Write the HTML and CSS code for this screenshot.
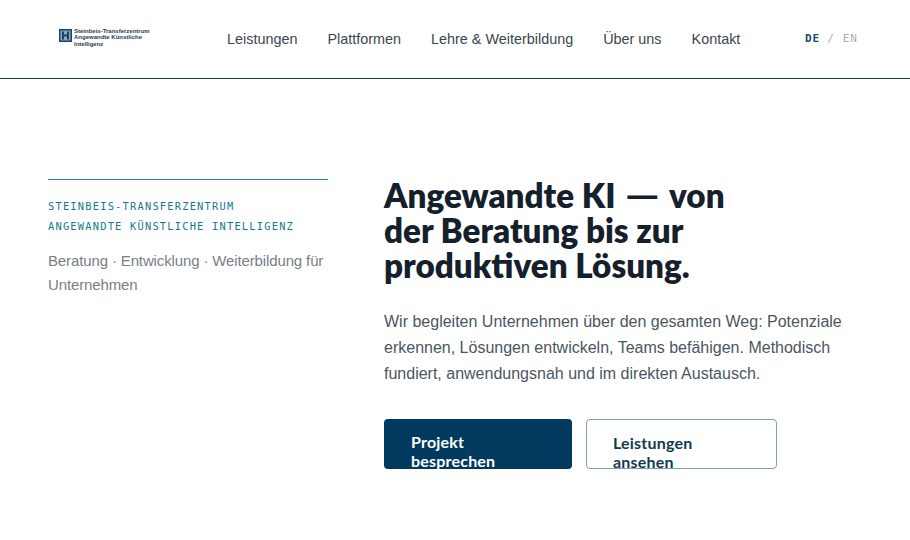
FILE: index.html
```html
<!DOCTYPE html>
<html lang="de">
<head>
  <meta charset="UTF-8">
  <title>Angewandte KI</title>
  <link rel="stylesheet" href="styles.css">
</head>
<body>
  <header class="site-header">
    <a class="logo" href="#">
      <svg class="logo-mark" viewBox="0 0 13 13" width="13" height="13">
        <rect x="0" y="0" width="13" height="13" fill="#1d4468"/>
        <rect x="1.500" y="1.500" width="10" height="10" fill="#8fa6bb"/>
        <path d="M3 2.500h2v3h3v-3h2v8H8v-3H5v3H3z" fill="#1d4468"/>
      </svg>
      <span class="logo-text">
        <span>Steinbeis-Transferzentrum</span>
        <span>Angewandte Künstliche</span>
        <span>Intelligenz</span>
      </span>
    </a>
    <nav class="main-nav">
      <a href="#">Leistungen</a>
      <a href="#">Plattformen</a>
      <a href="#">Lehre &amp; Weiterbildung</a>
      <a href="#">Über uns</a>
      <a href="#">Kontakt</a>
    </nav>
    <div class="lang-switch">
      <span class="lang-active">DE</span>
      <span class="lang-sep">/</span>
      <span class="lang-other">EN</span>
    </div>
  </header>

  <main class="hero">
    <aside class="hero-side">
      <p class="eyebrow">STEINBEIS-TRANSFERZENTRUM<br>ANGEWANDTE KÜNSTLICHE INTELLIGENZ</p>
      <p class="side-note">Beratung · Entwicklung · Weiterbildung für Unternehmen</p>
    </aside>
    <section class="hero-main">
      <h1>Angewandte KI <span class="dash">—</span> von der Beratung bis zur produktiven Lösung.</h1>
      <p class="lead">Wir begleiten Unternehmen über den gesamten Weg: Potenziale erkennen, Lösungen entwickeln, Teams befähigen. Methodisch fundiert, anwendungsnah und im direkten Austausch.</p>
      <div class="actions">
        <a class="btn btn-primary" href="#"><span>Projekt besprechen</span></a>
        <a class="btn btn-secondary" href="#"><span>Leistungen ansehen</span></a>
      </div>
    </section>
  </main>
</body>
</html>
```

FILE: styles.css
```css
* {
  margin: 0;
  padding: 0;
  box-sizing: border-box;
}

body {
  font-family: 'Liberation Sans', Arial, sans-serif;
  background: #fff;
  color: #14202b;
}

a {
  text-decoration: none;
  color: inherit;
}

/* Header */
.site-header {
  height: 79px;
  border-bottom: 1px solid #123a52;
  display: flex;
  align-items: center;
  padding: 0 52px 0 59px;
}

.logo {
  width: 168px;
  display: flex;
  align-items: flex-start;
  gap: 2px;
  margin-top: -3px;
}

.logo-mark {
  margin-top: 1px;
  flex-shrink: 0;
}

.logo-text {
  display: flex;
  flex-direction: column;
  font-size: 6px;
  font-weight: 700;
  line-height: 6.5px;
  color: #2a3d52;
}

.main-nav {
  display: flex;
  gap: 30px;
  font-size: 14.4px;
  color: #3a4651;
}

.lang-switch {
  margin-left: auto;
  margin-top: -2px;
  display: flex;
  gap: 8px;
  font-family: 'DejaVu Sans Mono', monospace;
  font-size: 11px;
  letter-spacing: 1px;
}

.lang-active {
  margin-right: -1px;
  font-weight: 700;
  color: #1f4a70;
}

.lang-sep,
.lang-other {
  color: #a9b0b5;
}

/* Hero */
.hero {
  display: grid;
  grid-template-columns: 280px 1fr;
  gap: 56px;
  padding: 100px 48px 0;
}

.hero-side {
  border-top: 1px solid #2390a8;
  padding-top: 16px;
}

.eyebrow {
  font-family: 'DejaVu Sans Mono', monospace;
  font-size: 10.4px;
  line-height: 20px;
  letter-spacing: 1.2px;
  color: #157a8c;
}

.side-note {
  margin-top: 13px;
  font-size: 15px;
  line-height: 24px;
  letter-spacing: -0.13px;
  color: #77808a;
}

.hero-main h1 {
  max-width: 360px;
  margin-top: -1px;
  font-family: Lato, sans-serif;
  font-size: 33.2px;
  font-weight: 800;
  line-height: 35px;
  color: #14202b;
}

.dash {
  display: inline-block;
  width: 37px;
  margin-left: 2px;
  transform: scaleX(1.3);
  transform-origin: left;
}

.lead {
  margin-top: 26px;
  max-width: 462px;
  font-size: 16px;
  line-height: 26px;
  color: #4a5662;
}

.actions {
  display: flex;
  gap: 14px;
  margin-top: 32px;
}

.btn {
  height: 50px;
  overflow: hidden;
  padding: 13px 26px 0;
  border-radius: 4px;
  font-family: Lato, sans-serif;
  font-size: 16px;
  font-weight: 700;
  line-height: 19px;
  letter-spacing: 0.2px;
}

.btn span {
  display: block;
  width: 110px;
}

.btn-primary {
  width: 188px;
  padding-left: 27px;
  background: #003a5f;
  color: #fff;
}

.btn-secondary {
  width: 191px;
  border: 1px solid #7f9fb3;
  color: #123a52;
}
```
